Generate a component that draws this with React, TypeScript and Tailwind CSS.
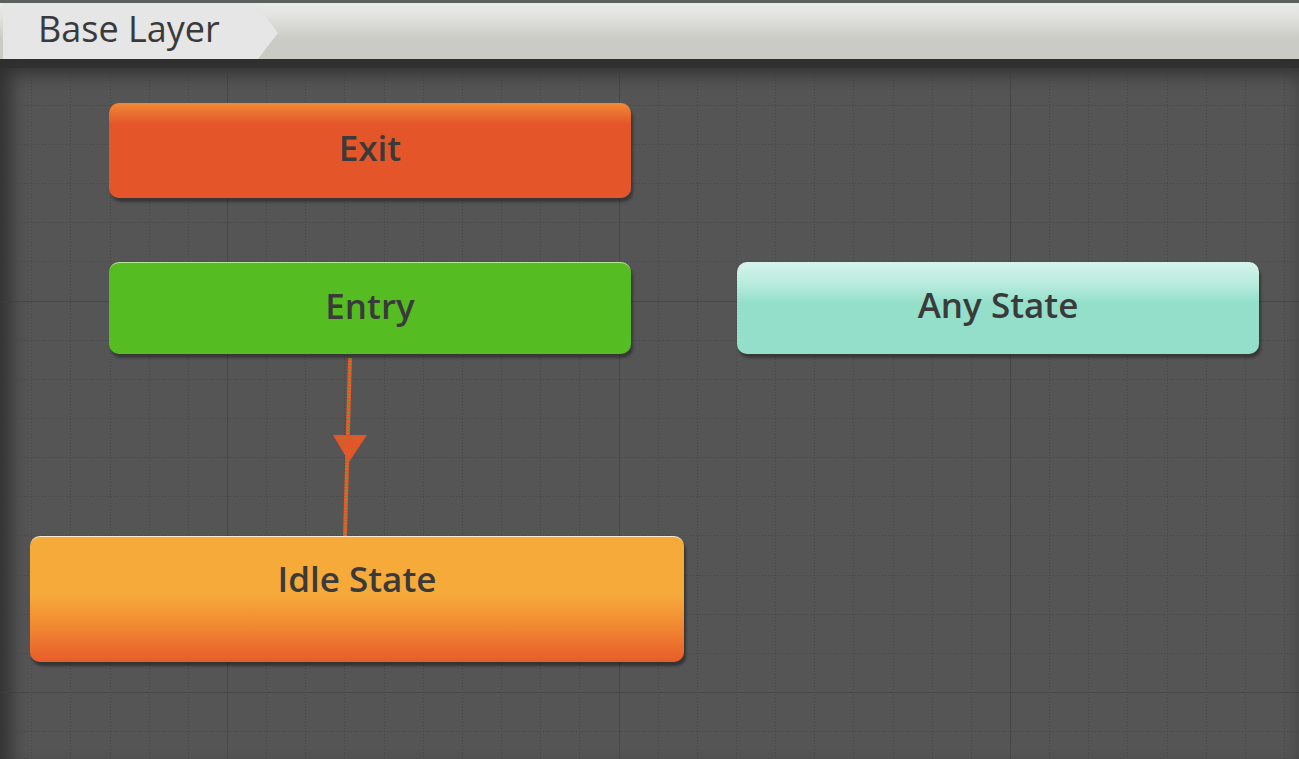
import React from 'react';

const SPACING = 39.15;
const X0 = 31.25;
const Y0 = 692 - 59 - SPACING * 15;

// grid lines for the animator canvas
function Grid() {
  const xs = Array.from({ length: 34 }, (_, k) => ({ v: X0 + SPACING * k, major: (k - 5) % 10 === 0 }));
  const ys = Array.from({ length: 20 }, (_, k) => ({ v: Y0 + SPACING * k, major: (k - 5) % 10 === 0 }));
  return (
    <svg className="absolute inset-0 w-full h-full" width="1299" height="700">
      {xs.map((l, i) => (
        <line
          key={'x' + i}
          x1={Math.round(l.v) + 0.5}
          x2={Math.round(l.v) + 0.5}
          y1={0}
          y2={700}
          stroke="#474747"
          strokeWidth={1}
          strokeDasharray={l.major ? undefined : '1 2'}
        />
      ))}
      {ys.map((l, i) => (
        <line
          key={'y' + i}
          y1={Math.round(l.v) + 0.5}
          y2={Math.round(l.v) + 0.5}
          x1={0}
          x2={1299}
          stroke="#474747"
          strokeWidth={1}
          strokeDasharray={l.major ? undefined : '1 2'}
        />
      ))}
    </svg>
  );
}

function Transition() {
  return (
    <svg className="absolute left-[320px] top-[295px]" width="60" height="185" viewBox="0 0 60 185">
      <line x1="30" y1="4" x2="25" y2="182" stroke="#e4562a" strokeWidth="4" />
      <line x1="30" y1="4" x2="25" y2="182" stroke="#5fae2c" strokeWidth="2" strokeDasharray="1 2" />
      <polygon points="13,81 47,81 29,108" fill="#e4562a" />
      <polygon points="20,84 40,84 29,100" fill="none" stroke="#6aa030" strokeWidth="1" strokeDasharray="1 3" />
    </svg>
  );
}

export default function App() {
  const label = 'text-[#3a3a3a] text-[35px] font-semibold leading-none mt-[-7px]';
  return (
    <div className="w-[1299px] h-[759px] overflow-hidden bg-[#555555] font-['Open_Sans','DejaVu_Sans',sans-serif]">
      {/* header with breadcrumb tab */}
      <div className="h-[59px] flex flex-col bg-[#c6c8c3]">
        <div className="h-[3px] bg-[#5c605c]" />
        <div className="flex flex-1 pl-[3px] bg-[linear-gradient(#e9e9e9_0%,#e6e6e4_15%,#cbcbc5_65%,#cbcbc5_100%)]">
          <div className="w-[252px] flex items-center bg-[#e6e6e6] pl-[35px]">
            <span className="text-[#3a3a3a] text-[36px] font-medium leading-none mt-[-4px]">Base Layer</span>
          </div>
          <svg width="24" height="56" viewBox="0 0 24 56">
            <polygon points="0,0 0,56 3,56 23,30 0,0" fill="#e6e6e6" />
          </svg>
        </div>
      </div>

      {/* graph canvas */}
      <div className="relative h-[700px] shadow-[inset_10px_12px_18px_rgba(0,0,0,0.28)]">
        <Grid />
        <div className="absolute inset-x-0 top-0 h-[9px] bg-[#3c3c3c]" />
        <div className="absolute inset-0 shadow-[inset_6px_14px_22px_rgba(0,0,0,0.25)] pointer-events-none" />

        <Transition />

        <div className="absolute left-[109px] top-[44px] w-[522px] h-[95px] rounded-[10px] flex items-center justify-center bg-[linear-gradient(#f08a36_0%,#e4562a_22%,#e4562a_100%)] shadow-[2px_4px_3px_rgba(0,0,0,0.35)]">
          <span className={label}>Exit</span>
        </div>

        <div className="absolute left-[109px] top-[203px] w-[522px] h-[92px] rounded-[10px] flex items-center justify-center bg-[#55bd22] border-t border-[#b8e89a] shadow-[2px_4px_3px_rgba(0,0,0,0.35)]">
          <span className={label}>Entry</span>
        </div>

        <div className="absolute left-[737px] top-[203px] w-[522px] h-[92px] rounded-[10px] flex items-center justify-center bg-[linear-gradient(#d6f4ec_0%,#b6ebdc_25%,#93dfca_45%,#93dfca_100%)] shadow-[2px_4px_3px_rgba(0,0,0,0.35)]">
          <span className={label}>Any State</span>
        </div>

        <div className="absolute left-[30px] top-[477px] w-[654px] h-[126px] rounded-[10px] flex justify-center pt-[31px] bg-[linear-gradient(#f6aa3a_0%,#f6aa3a_46%,#f18a33_70%,#e85c2a_100%)] border-t border-[#f7e9cf] shadow-[2px_4px_3px_rgba(0,0,0,0.4)]">
          <span className={label}>Idle State</span>
        </div>
      </div>
    </div>
  );
}
